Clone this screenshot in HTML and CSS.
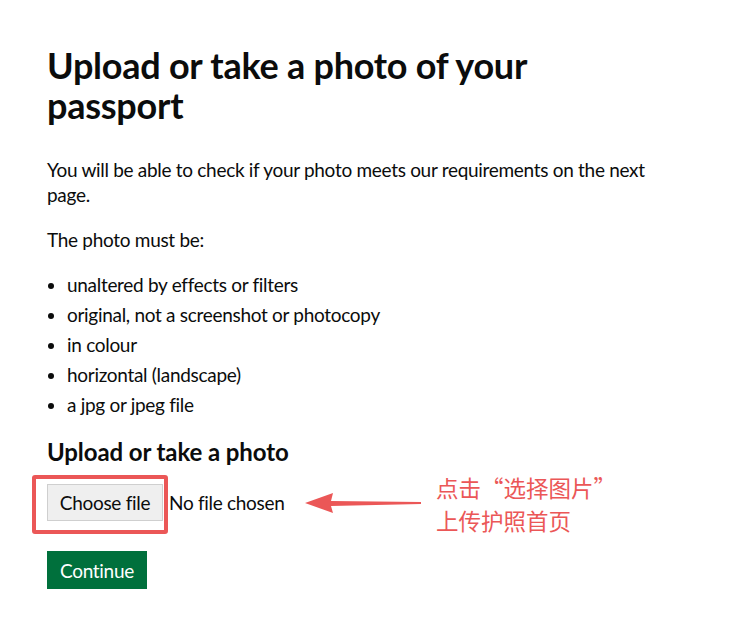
FILE: index.html
```html
<!DOCTYPE html>
<html lang="en">
<head>
<meta charset="utf-8">
<title>Upload or take a photo of your passport</title>
<link rel="stylesheet" href="styles.css">
</head>
<body>
<main class="page">
  <h1 class="heading-l">Upload or take a photo of your passport</h1>
  <p class="body">You will be able to check if your photo meets our requirements on the next page.</p>
  <p class="body">The photo must be:</p>
  <ul class="bullets">
    <li>unaltered by effects or filters</li>
    <li>original, not a screenshot or photocopy</li>
    <li>in colour</li>
    <li>horizontal (landscape)</li>
    <li>a jpg or jpeg file</li>
  </ul>
  <label class="heading-m" for="photo">Upload or take a photo</label>
  <div class="upload">
    <input class="file-input" id="photo" type="file">
    <label class="file-btn" for="photo">Choose file</label>
    <span class="file-status">No file chosen</span>
    <span class="highlight"></span>
    <div class="note">
      <svg class="arrow" width="120" height="24" viewBox="0 0 120 24">
        <path d="M0 11 L28 1 L26 9 L116 10 L116 12 L26 14 L28 21 Z" fill="#eb5757"/>
      </svg>
      <div class="note-text">
        <div class="note-line">点击“选择图片”</div>
        <div class="note-line">上传护照首页</div>
      </div>
    </div>
  </div>
  <button class="btn" type="button">Continue</button>
</main>
</body>
</html>
```

FILE: styles.css
```css
html, body {
  margin: 0;
  padding: 0;
  background: #ffffff;
}

.page {
  padding: 45px 47px 0;
  font-family: Lato, "Liberation Sans", sans-serif;
  color: #0b0c0c;
}

.heading-l {
  font-size: 36px;
  line-height: 40px;
  font-weight: 700;
  letter-spacing: -0.25px;
  margin: 0 0 32px;
  max-width: 500px;
}

.body {
  font-size: 19px;
  line-height: 25px;
  letter-spacing: -0.3px;
  margin: 0 0 20px;
}

.bullets {
  list-style: disc;
  margin: 0 0 20px;
  padding-left: 20px;
  font-size: 19px;
  line-height: 25px;
  letter-spacing: -0.3px;
}

.bullets li {
  margin-bottom: 5px;
}

.heading-m {
  display: block;
  font-size: 24px;
  line-height: 30px;
  font-weight: 700;
  letter-spacing: -0.1px;
  margin: 0 0 17px;
}

.upload {
  position: relative;
  display: flex;
  align-items: center;
  height: 37px;
  margin-bottom: 30px;
}

.file-input {
  position: absolute;
  width: 1px;
  height: 1px;
  opacity: 0;
  overflow: hidden;
}

.file-btn {
  box-sizing: border-box;
  display: flex;
  align-items: center;
  height: 37px;
  width: 116px;
  justify-content: center;
  font-size: 19px;
  letter-spacing: -0.3px;
  background: #efefef;
  border: 1px solid #cfcfcf;
  color: #0b0c0c;
  margin-right: 6px;
}

.file-status {
  font-size: 19px;
  letter-spacing: -0.3px;
}

.highlight {
  position: absolute;
  left: -15px;
  top: -9px;
  width: 128px;
  height: 51px;
  border: 4px solid #eb5757;
  border-radius: 3px;
}

.note {
  position: absolute;
  left: 258px;
  top: -13px;
  display: flex;
  align-items: center;
  gap: 11px;
}

.arrow {
  display: block;
}

.note-text {
  display: flex;
  flex-direction: column;
  font-family: "Noto Sans CJK SC", sans-serif;
  font-size: 22.5px;
  color: #eb5757;
}

.note-line {
  line-height: 33px;
  white-space: nowrap;
}

.btn {
  font-family: Lato, "Liberation Sans", sans-serif;
  font-size: 19px;
  line-height: 1;
  letter-spacing: -0.3px;
  padding: 8px 11px 7px;
  border: 2px solid transparent;
  border-radius: 0;
  background: #00703c;
  color: #ffffff;
  box-shadow: 0 2px 0 #002d18;
}
```
